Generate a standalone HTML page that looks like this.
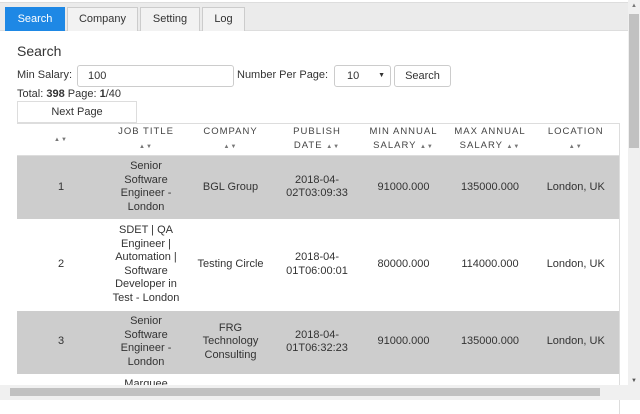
<!DOCTYPE html><html><head><style>
*{margin:0;padding:0;box-sizing:border-box}
body{width:640px;height:400px;overflow:hidden;background:#fff;font-family:"Liberation Sans",Arial,sans-serif;font-size:11px;color:#333;position:relative}
.abs{position:absolute}
.tabbar{left:0;top:2px;width:628px;height:29px;background:#ebebeb;border-top:1px solid #ddd;border-bottom:1px solid #ddd}
.tab{position:absolute;top:7px;height:24px;border:1px solid #ccc;border-bottom:none;background:#f2f2f2;text-align:center;line-height:22px;font-size:11px;color:#333}
table{position:absolute;left:17px;top:123px;width:602px;border-collapse:collapse;table-layout:fixed;border-right:1px solid #ddd}
td,th{text-align:center;vertical-align:middle;font-size:11px;line-height:13.5px;color:#333;padding:0;white-space:nowrap;overflow:hidden}
th{font-weight:normal;letter-spacing:1px;font-size:9.5px;color:#444;height:32px;background:#fff;border-top:1px solid #ddd;border-bottom:1px solid #ddd}
.ar{font-size:6px;color:#777;letter-spacing:1px}
tr.g td{background:#cdcdcd}
</style></head><body>
<div class="abs tabbar"></div>
<div class="tab" style="left:5px;width:60px;background:#1e88e5;border-color:#1e88e5;color:#fff">Search</div>
<div class="tab" style="left:67px;width:71px">Company</div>
<div class="tab" style="left:140px;width:60px">Setting</div>
<div class="tab" style="left:202px;width:43px">Log</div>
<div class="abs" style="left:17px;top:43px;font-size:14px;color:#333">Search</div>
<div class="abs" style="left:17px;top:69px">Min Salary:</div>
<div class="abs" style="left:77px;top:65px;width:157px;height:22px;border:1px solid #ccc;border-radius:3px;padding-left:10px;line-height:20px">100</div>
<div class="abs" style="left:237px;top:69px">Number Per Page:</div>
<div class="abs" style="left:334px;top:65px;width:57px;height:22px;border:1px solid #ccc;border-radius:3px;padding-left:12px;line-height:20px">10<span style="position:absolute;right:5px;font-size:7px">▼</span></div>
<div class="abs" style="left:394px;top:65px;width:57px;height:22px;border:1px solid #ccc;border-radius:3px;text-align:center;line-height:20px">Search</div>
<div class="abs" style="left:17px;top:88px">Total: <b>398</b> Page: <b>1</b>/40</div>
<div class="abs" style="left:17px;top:101px;width:120px;height:22px;border:1px solid #ddd;text-align:center;line-height:20px">Next Page</div>
<table>
<colgroup><col style="width:88px"><col style="width:82px"><col style="width:87px"><col style="width:86px"><col style="width:87px"><col style="width:86px"><col style="width:86px"></colgroup>
<tr><th><span class="ar">▲▼</span></th><th>JOB TITLE<br><span class="ar">▲▼</span></th><th>COMPANY<br><span class="ar">▲▼</span></th><th>PUBLISH<br>DATE <span class="ar">▲▼</span></th><th>MIN ANNUAL<br>SALARY <span class="ar">▲▼</span></th><th>MAX ANNUAL<br>SALARY <span class="ar">▲▼</span></th><th>LOCATION<br><span class="ar">▲▼</span></th></tr>
<tr class="g" style="height:63px"><td>1</td><td>Senior<br>Software<br>Engineer -<br>London</td><td>BGL Group</td><td>2018-04-<br>02T03:09:33</td><td>91000.000</td><td>135000.000</td><td>London, UK</td></tr>
<tr style="height:92px"><td>2</td><td>SDET | QA<br>Engineer |<br>Automation |<br>Software<br>Developer in<br>Test - London</td><td>Testing Circle</td><td>2018-04-<br>01T06:00:01</td><td>80000.000</td><td>114000.000</td><td>London, UK</td></tr>
<tr class="g" style="height:63px"><td>3</td><td>Senior<br>Software<br>Engineer -<br>London</td><td>FRG<br>Technology<br>Consulting</td><td>2018-04-<br>01T06:32:23</td><td>91000.000</td><td>135000.000</td><td>London, UK</td></tr>
<tr style="height:40px"><td></td><td style="vertical-align:top;padding-top:4px">Marquee</td><td></td><td></td><td></td><td></td><td></td></tr>
</table>
<div class="abs" style="left:0;top:385px;width:628px;height:15px;background:#f0f0f0"></div>
<div class="abs" style="left:10px;top:388px;width:590px;height:8px;background:#c1c1c1"></div>
<div class="abs" style="left:628px;top:0;width:12px;height:400px;background:#f0f0f0"></div>
<div class="abs" style="left:629px;top:14px;width:10px;height:134px;background:#c1c1c1"></div>
<div class="abs" style="left:631px;top:3px;font-size:6px;color:#777">▲</div>
<div class="abs" style="left:631px;top:378px;font-size:6px;color:#555">▼</div>
</body></html>
